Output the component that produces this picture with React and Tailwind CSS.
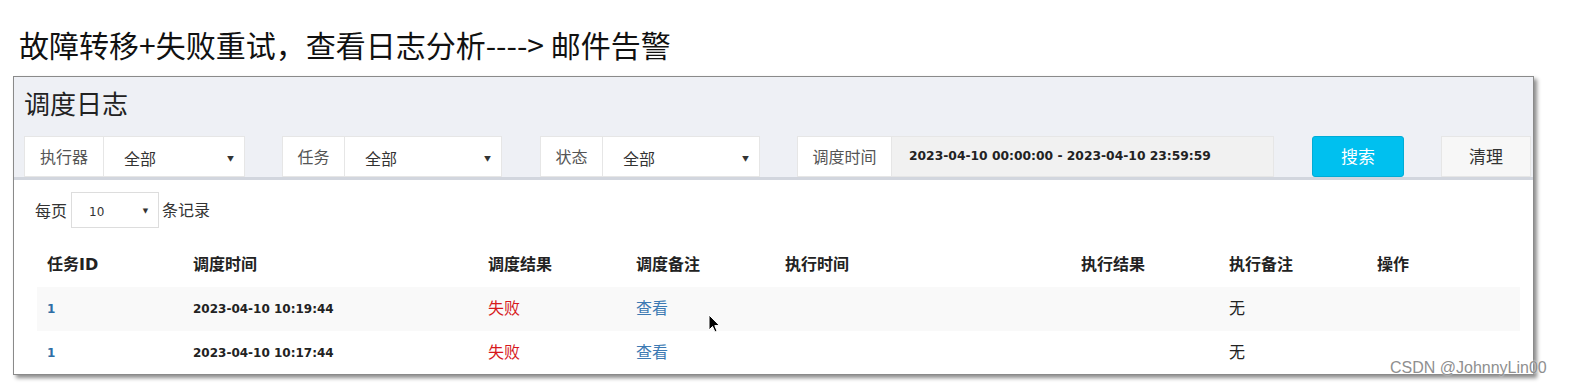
import React from "react";

const cjk = "font-['Noto_Sans_CJK_SC',sans-serif]";
const mix = "font-['DejaVu_Sans','Noto_Sans_CJK_SC',sans-serif]";

function Caret() {
  return <span className="text-[7px] text-[#333] leading-none">▼</span>;
}

function SelectGroup({ label, lw, sw }) {
  return (
    <div className="flex h-full">
      <div
        className={`${lw} h-full bg-white border border-[#e6e6e6] flex items-center justify-center text-[16px] text-[#555] pb-[2px]`}
      >
        {label}
      </div>
      <div
        className={`${sw} h-full bg-white border border-l-0 border-[#e6e6e6] flex items-center justify-between pl-[20px] pr-[10px] pt-[3px] text-[16px] text-[#333]`}
      >
        <span>全部</span>
        <Caret />
      </div>
    </div>
  );
}

const cols = [
  { t: "任务ID", w: "w-[146px]" },
  { t: "调度时间", w: "w-[295px]" },
  { t: "调度结果", w: "w-[148px]" },
  { t: "调度备注", w: "w-[149px]" },
  { t: "执行时间", w: "w-[296px]" },
  { t: "执行结果", w: "w-[148px]" },
  { t: "执行备注", w: "w-[148px]" },
  { t: "操作", w: "w-[151px]" },
];

const rows = [
  { id: "1", time: "2023-04-10 10:19:44" },
  { id: "1", time: "2023-04-10 10:17:44" },
];

export default function App() {
  return (
    <div className={`relative w-[1573px] h-[388px] bg-white overflow-hidden ${cjk}`}>
      <div className="h-[76px] pl-[19px] pt-[26px] text-[30px] leading-[37px] text-[#111]">
        故障转移+失败重试，查看日志分析----&gt; 邮件告警
      </div>

      <div className="ml-[13px] w-[1521px] h-[299px] border border-[#8a8a8a] bg-[#eef0f5] shadow-[3px_3px_4px_rgba(0,0,0,0.45)] flex flex-col">
        <div className="h-[59px] pl-[10px] pt-[10px] text-[26px] leading-[32px] text-[#222] shrink-0">
          调度日志
        </div>

        <div className="h-[41px] pl-[10px] flex items-stretch shrink-0">
          <SelectGroup label="执行器" lw="w-[80px]" sw="w-[141px]" />
          <div className="ml-[37px]">
            <SelectGroup label="任务" lw="w-[63px]" sw="w-[157px]" />
          </div>
          <div className="ml-[38px]">
            <SelectGroup label="状态" lw="w-[63px]" sw="w-[157px]" />
          </div>
          <div className="ml-[37px] flex h-full">
            <div className="w-[95px] h-full bg-white border border-[#e6e6e6] flex items-center justify-center text-[16px] text-[#555] pb-[2px]">
              调度时间
            </div>
            <div className={`w-[382px] h-full bg-[#f1f1f1] border border-l-0 border-[#e6e6e6] flex items-center pl-[17px] text-[12.3px] font-semibold text-[#222] ${mix}`}>
              2023-04-10 00:00:00 - 2023-04-10 23:59:59
            </div>
          </div>
          <div className="ml-[38px] w-[92px] h-full rounded-[3px] bg-[#00c0ef] border border-[#00acd6] flex items-center justify-center text-white text-[17px] pb-[2px]">
            搜索
          </div>
          <div className="ml-[37px] w-[90px] h-full bg-[#f7f7f7] border border-[#e6e6e6] flex items-center justify-center text-[#333] text-[17px] pb-[2px]">
            清理
          </div>
        </div>

        <div className="flex-1 bg-white border-t-[3px] border-[#d2d6de] pl-[21px] pr-[10px] pt-[12px] min-h-0 overflow-hidden">
          <div className="flex items-center h-[36px] text-[16px] text-[#333]">
            <span>每页</span>
            <div className={`ml-[4px] w-[88px] h-[36px] border border-[#dddddd] flex items-center justify-between pl-[17px] pr-[10px] pt-[3px] text-[12px] ${mix}`}>
              <span>10</span>
              <Caret />
            </div>
            <span className="ml-[3px] pb-[2px]">条记录</span>
          </div>

          <div className={`ml-[2px] mt-[15px] w-[1483px] ${mix}`}>
            <div className="flex h-[44px] items-center">
              {cols.map((c) => (
                <div key={c.t} className={`${c.w} pl-[10px] text-[16px] font-bold text-[#222]`}>
                  {c.t}
                </div>
              ))}
            </div>
            {rows.map((r, i) => (
              <div
                key={i}
                className={`flex h-[44px] items-center ${i === 0 ? "bg-[#f9f9f9]" : "bg-white"}`}
              >
                <div className="w-[146px] pl-[10px] text-[12px] font-bold text-[#2f6ea5]">{r.id}</div>
                <div className="w-[295px] pl-[10px] text-[12px] font-bold text-[#222]">{r.time}</div>
                <div className="w-[148px] pl-[10px] text-[16px] text-[#d7191c]">失败</div>
                <div className="w-[149px] pl-[10px] text-[16px] text-[#3d7ab3]">查看</div>
                <div className="w-[296px] pl-[10px]"></div>
                <div className="w-[148px] pl-[10px]"></div>
                <div className="w-[148px] pl-[10px] text-[16px] text-[#222]">无</div>
                <div className="w-[153px] pl-[10px]"></div>
              </div>
            ))}
          </div>
        </div>
      </div>

      <svg
        className="absolute left-[708px] top-[314px]"
        width="14"
        height="20"
        viewBox="0 0 14 20"
      >
        <path
          d="M1 1 L1 16 L4.5 12.5 L7 18 L9 17 L6.8 11.6 L11.5 11.6 Z"
          fill="#000"
          stroke="#fff"
          strokeWidth="1"
        />
      </svg>

      <div className="absolute left-[1390px] top-[358px] text-[16px] leading-[20px] text-[#8f8f8f] font-['Liberation_Sans',sans-serif] [text-shadow:0_0_2px_#fff]">
        CSDN @JohnnyLin00
      </div>
    </div>
  );
}
